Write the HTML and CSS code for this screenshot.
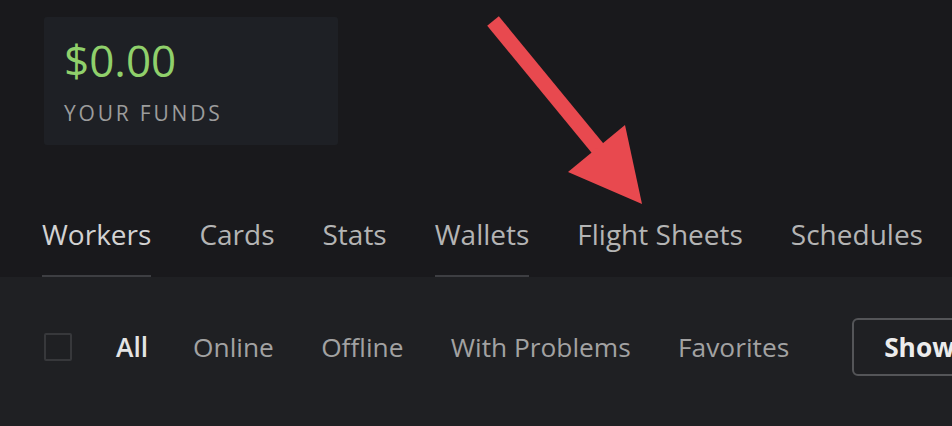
FILE: index.html
```html
<!DOCTYPE html>
<html>
<head>
<meta charset="utf-8">
<link rel="stylesheet" href="styles.css">
</head>
<body>
<div class="top">
  <div class="funds">
    <div class="amount">$0.00</div>
    <div class="label">YOUR FUNDS</div>
  </div>
  <nav class="tabs">
    <span class="tab active">Workers</span>
    <span class="tab">Cards</span>
    <span class="tab">Stats</span>
    <span class="tab active">Wallets</span>
    <span class="tab">Flight Sheets</span>
    <span class="tab">Schedules</span>
  </nav>
</div>
<div class="bottom">
  <div class="filters">
    <span class="checkbox"></span>
    <span class="filter current">All</span>
    <span class="filter">Online</span>
    <span class="filter">Offline</span>
    <span class="filter">With Problems</span>
    <span class="filter">Favorites</span>
    <span class="btn">Show</span>
  </div>
</div>
<svg class="arrow" width="952" height="426" viewBox="0 0 952 426">
  <line x1="493" y1="21" x2="604" y2="156" stroke="#e8494f" stroke-width="15"/>
  <polygon points="568,172 625,125 642,204" fill="#e8494f"/>
</svg>
</body>
</html>
```
FILE: styles.css
```css
html, body {
  margin: 0;
  padding: 0;
}
body {
  width: 952px;
  height: 426px;
  overflow: hidden;
  background: #1f2023;
  font-family: "Open Sans", "Noto Sans", sans-serif;
  position: relative;
}
.top {
  background: #19191c;
  padding: 17px 0 0 42px;
}
.funds {
  margin-left: 2px;
  width: 294px;
  height: 128px;
  box-sizing: border-box;
  background: #1e2025;
  border-radius: 3px;
  padding: 21px 0 0 20px;
}
.amount {
  color: #90d06b;
  font-size: 44px;
  line-height: 44px;
}
.label {
  color: #9c9c9c;
  font-size: 21px;
  letter-spacing: 2.8px;
  margin-top: 19px;
  line-height: 24px;
}
.tabs {
  display: flex;
  gap: 48px;
  margin-top: 72px;
  white-space: nowrap;
}
.tab {
  color: #b4b4b4;
  font-size: 28px;
  line-height: 34px;
  padding-bottom: 24px;
  border-bottom: 2px solid transparent;
}
.tab.active {
  border-bottom-color: #3d3e42;
}
.tab:first-child {
  color: #d2d2d2;
}
.filters {
  display: flex;
  align-items: center;
  padding: 41px 0 0 44px;
  height: 58px;
  white-space: nowrap;
}
.checkbox {
  width: 24px;
  height: 24px;
  border: 2px solid #37383b;
  border-radius: 2px;
  margin-right: 44px;
  flex: none;
}
.filter {
  color: #a2a2a2;
  font-size: 26.3px;
  margin-right: 47.3px;
}
.filter.current {
  color: #e4e4e4;
  font-weight: 600;
  margin-right: 45px;
}
.btn {
  margin-left: 15.6px;
  border: 2px solid #545558;
  border-radius: 6px;
  height: 58px;
  box-sizing: border-box;
  padding: 0 30px;
  display: flex;
  align-items: center;
  color: #ececec;
  font-weight: 700;
  font-size: 26.3px;
}
.arrow {
  position: absolute;
  left: 0;
  top: 0;
  pointer-events: none;
}
```
